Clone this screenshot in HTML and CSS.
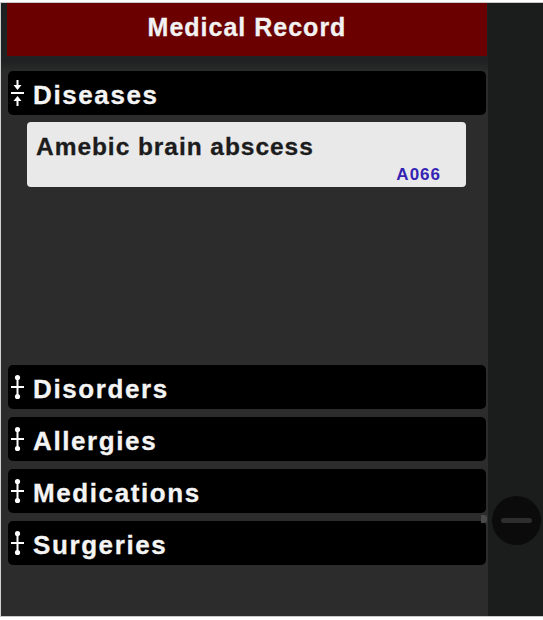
FILE: index.html
```html
<!DOCTYPE html>
<html>
<head>
<meta charset="utf-8">
<title>Medical Record</title>
<link rel="stylesheet" href="styles.css">
</head>
<body>
<div class="frame">
  <div class="main">
    <div class="title">Medical Record</div>
    <div class="list">
      <section class="group">
        <div class="bar">
          <svg class="icon" viewBox="0 0 13 26"><path d="M6.5 0V5M6.5 21V26" stroke="#fff" stroke-width="2"/><polygon points="2.5,5 10.5,5 6.5,10" fill="#fff"/><polygon points="6.5,16 2.5,21 10.5,21" fill="#fff"/><rect x="0" y="12" width="13" height="2" fill="#fff"/></svg>
          <span>Diseases</span>
        </div>
        <div class="content">
          <div class="card">
            <div class="card-title">Amebic brain abscess</div>
            <div class="code">A066</div>
          </div>
        </div>
      </section>
      <section class="group">
        <div class="bar">
          <svg class="icon" viewBox="0 0 13 26"><path d="M6.5 3V23" stroke="#fff" stroke-width="2"/><circle cx="6.5" cy="3.5" r="2.6" fill="#fff"/><circle cx="6.5" cy="22.5" r="2.6" fill="#fff"/><rect x="0" y="12" width="13" height="2" fill="#fff"/></svg>
          <span>Disorders</span>
        </div>
      </section>
      <section class="group">
        <div class="bar">
          <svg class="icon" viewBox="0 0 13 26"><path d="M6.5 3V23" stroke="#fff" stroke-width="2"/><circle cx="6.5" cy="3.5" r="2.6" fill="#fff"/><circle cx="6.5" cy="22.5" r="2.6" fill="#fff"/><rect x="0" y="12" width="13" height="2" fill="#fff"/></svg>
          <span>Allergies</span>
        </div>
      </section>
      <section class="group">
        <div class="bar">
          <svg class="icon" viewBox="0 0 13 26"><path d="M6.5 3V23" stroke="#fff" stroke-width="2"/><circle cx="6.5" cy="3.5" r="2.6" fill="#fff"/><circle cx="6.5" cy="22.5" r="2.6" fill="#fff"/><rect x="0" y="12" width="13" height="2" fill="#fff"/></svg>
          <span>Medications</span>
        </div>
      </section>
      <section class="group">
        <div class="bar">
          <svg class="icon" viewBox="0 0 13 26"><path d="M6.5 3V23" stroke="#fff" stroke-width="2"/><circle cx="6.5" cy="3.5" r="2.6" fill="#fff"/><circle cx="6.5" cy="22.5" r="2.6" fill="#fff"/><rect x="0" y="12" width="13" height="2" fill="#fff"/></svg>
          <span>Surgeries</span>
        </div>
      </section>
    </div>
  </div>
  <div class="side">
    <div class="minus"><span class="minus-line"></span></div>
  </div>
</div>
</body>
</html>
```
FILE: styles.css
```css
html, body {
  margin: 0;
  padding: 0;
  background: #ffffff;
  font-family: "Liberation Sans", Arial, sans-serif;
}

.frame {
  margin-top: 2px;
  height: 613px;
  border-top: 1px solid #c9c9c9;
  border-bottom: 1px solid #c9c9c9;
  border-left: 1px solid #d0d0d0;
  display: flex;
}

.main {
  width: 487px;
  box-sizing: border-box;
  padding: 0 1px 0 6px;
  background: linear-gradient(#1e2121 0, #1f2222 58px, #2c2c2c 70px, #2c2c2c 100%);
}

.title {
  height: 53px;
  box-sizing: border-box;
  padding-bottom: 4px;
  line-height: 49px;
  background: #6b0000;
  color: #f2f2f2;
  text-align: center;
  font-weight: bold;
  font-size: 25px;
  letter-spacing: 1px;
  -webkit-text-stroke: 0.3px #f2f2f2;
}

.list {
  padding: 15px 1px 0 1px;
  display: flex;
  flex-direction: column;
  gap: 8px;
}

.bar {
  height: 44px;
  box-sizing: border-box;
  padding: 4px 0 0 3px;
  background: #000;
  border-radius: 5px;
  display: flex;
  align-items: center;
  gap: 9px;
  color: #f4f4f4;
  font-weight: bold;
  font-size: 26px;
  line-height: 40px;
  letter-spacing: 1.6px;
  -webkit-text-stroke: 0.3px #f4f4f4;
}

.icon {
  width: 13px;
  height: 26px;
  flex: none;
  margin-top: -4px;
}

.content {
  height: 242px;
  padding: 7px 20px 0 19px;
  box-sizing: border-box;
}

.card {
  background: #e9e9e9;
  border-radius: 4px;
  padding: 11px 26px 3px 9px;
  display: flex;
  flex-direction: column;
}

.card-title {
  font-weight: bold;
  font-size: 24.5px;
  line-height: 27px;
  letter-spacing: 0.95px;
  color: #1c1c1c;
  -webkit-text-stroke: 0.3px #1c1c1c;
}

.code {
  margin-top: 6px;
  align-self: flex-end;
  font-weight: bold;
  font-size: 17px;
  line-height: 18px;
  letter-spacing: 1px;
  margin-right: -1px;
  color: #3524b4;
}

.side {
  flex: 1;
  background: #1b1d1d;
  padding: 493px 0 0 4px;
  box-sizing: border-box;
}

.minus {
  position: relative;
  width: 49px;
  height: 49px;
  border-radius: 50%;
  background: #0b0b0b;
  display: flex;
  align-items: center;
  justify-content: center;
}

.minus::before {
  content: "";
  position: absolute;
  left: -11px;
  top: 19px;
  width: 6px;
  height: 8px;
  border-radius: 0 3px 3px 0;
  background: #4a4a4a;
}

.minus-line {
  width: 31px;
  height: 5px;
  border-radius: 3px;
  background: #2e2e2e;
}
```
